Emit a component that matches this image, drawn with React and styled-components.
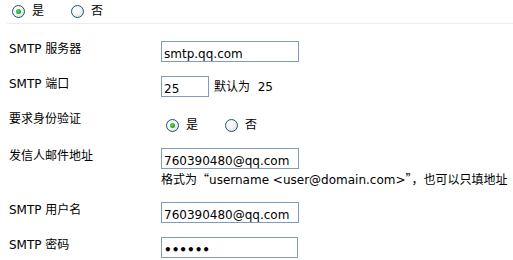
import styled, { createGlobalStyle } from 'styled-components'

const GlobalStyle = createGlobalStyle`
  body {
    margin: 0;
    background: #fff;
    font-family: "DejaVu Sans", "Noto Sans CJK SC", sans-serif;
    font-size: 12px;
    color: #000;
  }
`

const Page = styled.div`
  width: 513px;
  height: 260px;
  overflow: hidden;
`

const TopBar = styled.div`
  height: 23px;
  margin-left: 7px;
  padding-left: 5px;
  display: flex;
  align-items: center;
  border-bottom: 1px solid #ececec;
`

const Form = styled.div`
  padding-top: 17px;
  display: flex;
  flex-direction: column;
  gap: 14px;
`

const Row = styled.div`
  display: grid;
  grid-template-columns: 161px 1fr;
  min-height: ${(props) => props.$height || 21}px;
`

const Label = styled.div`
  padding-left: 9px;
  padding-top: 1px;
  line-height: 15px;
  white-space: nowrap;
`

const Field = styled.div`
  display: flex;
  flex-direction: column;
  align-items: flex-start;
`

const Inline = styled.div`
  display: flex;
  align-items: flex-end;
  gap: 5px;
`

const Input = styled.input`
  box-sizing: border-box;
  width: ${(props) => props.$width || 138}px;
  height: 21px;
  margin: 0;
  padding: 4px 2px 0;
  border: 1px solid #7f9db9;
  font-family: "DejaVu Sans", sans-serif;
  font-size: 12px;
  font-weight: ${(props) => (props.type === 'password' ? 'bold' : 'normal')};
  color: #000;
  background: #fff;
  outline: none;
`

const Suffix = styled.span`
  line-height: 15px;
  padding-bottom: 2px;
  white-space: pre;
`

const Hint = styled.div`
  margin-top: 2px;
  line-height: 16px;
  white-space: nowrap;
`

const Punct = styled.span`
  font-family: "Noto Sans CJK SC", sans-serif;
`

const RadioGroup = styled.div`
  display: flex;
  align-items: center;
  padding-top: ${(props) => props.$top || 0}px;
  padding-left: ${(props) => props.$left || 0}px;
`

const Option = styled.label`
  display: flex;
  align-items: center;
  gap: 7px;
  margin-right: 27px;
  line-height: 15px;
`

const Radio = styled.span`
  box-sizing: border-box;
  width: 13px;
  height: 13px;
  border-radius: 50%;
  border: 1px solid #1c5180;
  background: radial-gradient(circle at 35% 35%, #ffffff 0%, #f4f4f0 45%, #d6d6cf 100%);
  display: flex;
  align-items: center;
  justify-content: center;

  &::after {
    content: '';
    display: ${(props) => (props.$checked ? 'block' : 'none')};
    width: 5px;
    height: 5px;
    border-radius: 50%;
    background: radial-gradient(circle at 40% 40%, #5fd65f 0%, #21a121 70%, #1a8a1a 100%);
  }
`

const YesNo = ({ top, left }) => (
  <RadioGroup $top={top} $left={left}>
    <Option>
      <Radio $checked />
      是
    </Option>
    <Option>
      <Radio />
      否
    </Option>
  </RadioGroup>
)

const App = () => {
  return (
    <Page>
      <GlobalStyle />
      <TopBar>
        <YesNo />
      </TopBar>
      <Form>
        <Row>
          <Label>SMTP 服务器</Label>
          <Field>
            <Input defaultValue="smtp.qq.com" />
          </Field>
        </Row>
        <Row>
          <Label>SMTP 端口</Label>
          <Field>
            <Inline>
              <Input $width={48} defaultValue="25" />
              <Suffix>默认为  25</Suffix>
            </Inline>
          </Field>
        </Row>
        <Row $height={23}>
          <Label>要求身份验证</Label>
          <Field>
            <YesNo top={7} left={5} />
          </Field>
        </Row>
        <Row>
          <Label>发信人邮件地址</Label>
          <Field>
            <Input defaultValue="760390480@qq.com" />
            <Hint>
              格式为<Punct>“</Punct>username &lt;user@domain.com&gt;<Punct>”，</Punct>也可以只填地址
            </Hint>
          </Field>
        </Row>
        <Row>
          <Label>SMTP 用户名</Label>
          <Field>
            <Input defaultValue="760390480@qq.com" />
          </Field>
        </Row>
        <Row>
          <Label>SMTP 密码</Label>
          <Field>
            <Input type="password" $width={137} defaultValue="123456" />
          </Field>
        </Row>
      </Form>
    </Page>
  )
}

export default App
